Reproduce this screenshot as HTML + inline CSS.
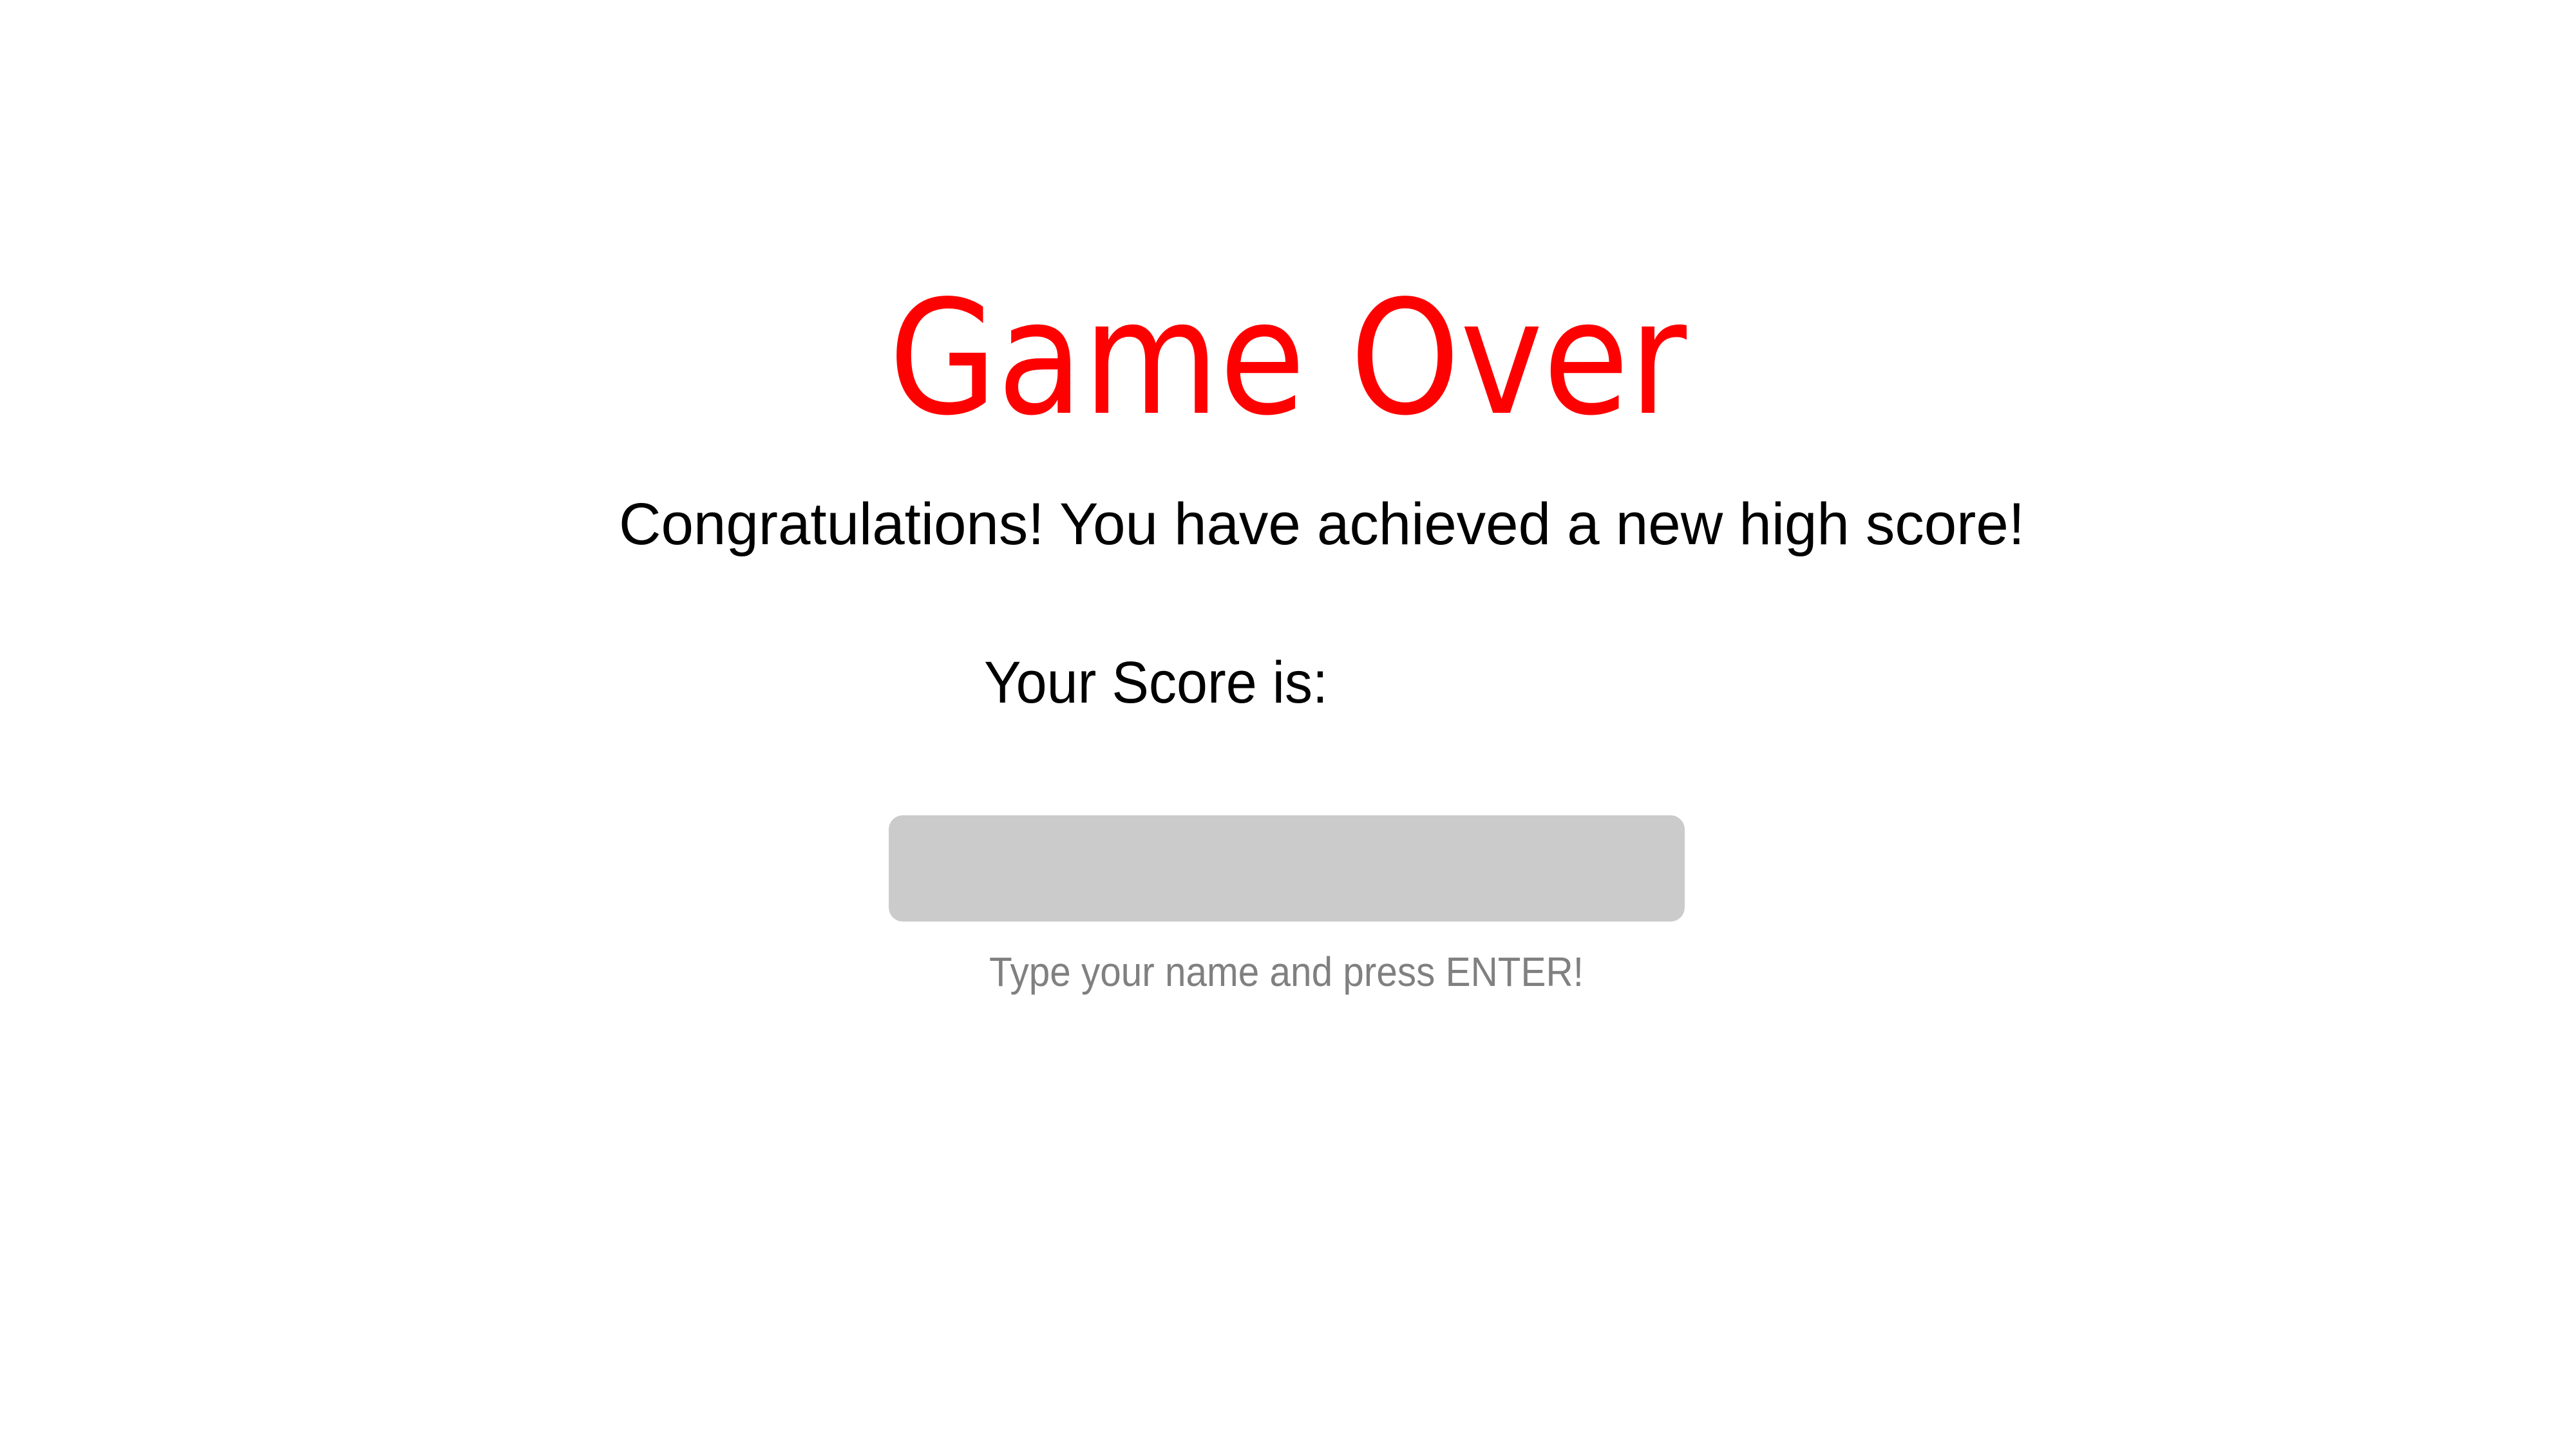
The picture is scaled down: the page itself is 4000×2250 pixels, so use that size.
<!DOCTYPE html>
<html><head><style>
html,body{margin:0;padding:0;background:#fff;width:4000px;height:2250px;overflow:hidden}
svg{display:block}
</style></head><body>
<svg width="4000" height="2250" xmlns="http://www.w3.org/2000/svg">
<text x="1380" y="641" font-family="DejaVu Sans, sans-serif" font-size="245" fill="#ff0000" textLength="1239" lengthAdjust="spacingAndGlyphs">Game Over</text>
<text x="961" y="845" font-family="Liberation Sans, sans-serif" font-size="92" fill="#000" textLength="2183" lengthAdjust="spacingAndGlyphs">Congratulations! You have achieved a new high score!</text>
<text x="1528" y="1091" font-family="Liberation Sans, sans-serif" font-size="92" fill="#000" textLength="534" lengthAdjust="spacingAndGlyphs">Your Score is:</text>
<rect x="1380" y="1266" width="1236" height="165" rx="22" ry="22" fill="#cbcbcb"/>
<text x="1536" y="1531" font-family="Liberation Sans, sans-serif" font-size="64" fill="#808080" textLength="923" lengthAdjust="spacingAndGlyphs">Type your name and press ENTER!</text>
</svg>
</body></html>
